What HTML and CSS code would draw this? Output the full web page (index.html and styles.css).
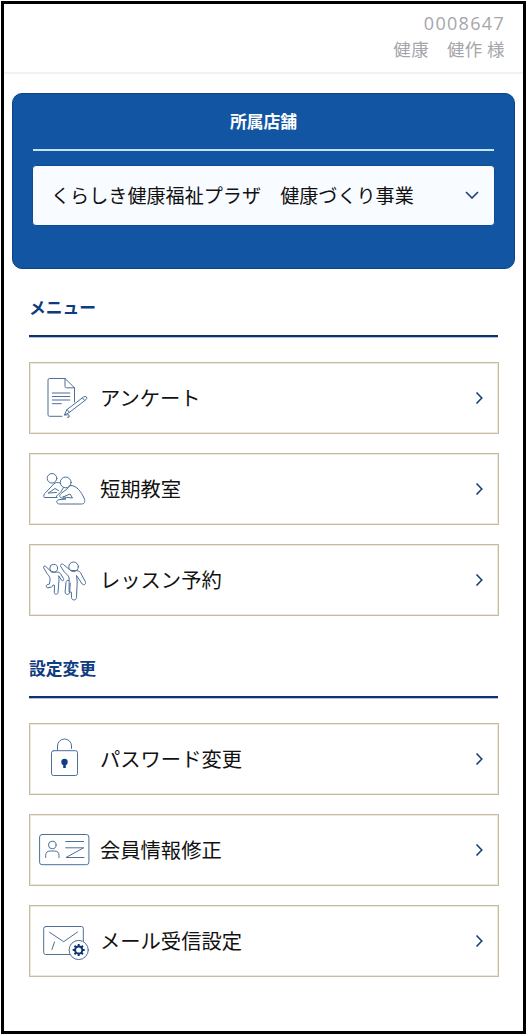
FILE: index.html
```html
<!DOCTYPE html>
<html lang="ja">

<head>
    <meta charset="UTF-8">
    <meta name="viewport" content="width=device-width, initial-scale=1.0">
    <title>メニュー</title>
    <link rel="stylesheet" href="styles.css">
</head>

<body>
    <div class="app">
        <header class="header">
            <div class="member-no">0008647</div>
            <div class="member-name">健康　健作 様</div>
        </header>

        <!-- 所属店舗 -->
        <section class="store">
            <h2 class="store-title">所属店舗</h2>
            <button type="button" class="store-select">
                <span>くらしき健康福祉プラザ　健康づくり事業</span>
                <svg class="chevron-down" viewBox="0 0 14 8"><path d="M1 1l6 6 6-6" /></svg>
            </button>
        </section>

        <!-- メニュー -->
        <section class="menu">
            <h2 class="menu-title">メニュー</h2>
            <a href="#" class="menu-item">
                <svg class="icon" viewBox="0 0 56 56">
                    <path d="M26 46.3H13.5a1.5 1.5 0 0 1-1.5-1.5V10a1.5 1.5 0 0 1 1.5-1.5H29l9.5 9.3v14M29 8.5v7.8a1.5 1.5 0 0 0 1.5 1.5h8" />
                    <path d="M16.3 23h17.5M16.3 26.5h17.5M16.3 30h17.5M16.3 33.7h9" />
                    <path d="M28.5 44.8l2.5-5.3L47.5 27q2-1.4 3 0t-.8 2.9L33.5 42.300zM31 39.5l2.5 2.8M46.5 27.8l2 2.6M28.5 44.8c1.5 1 3-.6 4.3 0s-1.5 1.7-1.3 2.5 1.7.2 2-1" />
                </svg>
                <span class="label">アンケート</span>
                <svg class="chevron" viewBox="0 0 8 14"><path d="M1.500 1.500L6.800 7l-5.300 5.500" /></svg>
            </a>
            <a href="#" class="menu-item">
                <svg class="icon" viewBox="0 0 56 56">
                    <circle cx="16" cy="17.3" r="4.800" />
                    <path d="M24 22c-2.500-1-4.500-.6-6.300 1L10 31.300c-2 1.700-3 4-1.600 5.200H21M12.500 32l8-.5M12.500 32l6.500-4.500 3.500 2" />
                    <circle cx="29.700" cy="21.400" r="5.400" />
                    <path d="M35 24.500c6 0 10.500 7 13 12.500 1.600 4 .4 6-2.500 6H23.500c-3.500 0-3.600-4-.5-4.300l7-.7-4.500-1c-2.500-.7-2.300-3 0-4.800L31 28c1.500-1.500 2-3 4-3.500M20 36.500c1-2.500 2-3 4.500-5l3-5M27 36l7-3 2.500 4-9.500-1" />
                </svg>
                <span class="label">短期教室</span>
                <svg class="chevron" viewBox="0 0 8 14"><path d="M1.500 1.500L6.800 7l-5.300 5.500" /></svg>
            </a>
            <a href="#" class="menu-item">
                <svg class="icon" viewBox="0 0 56 56">
                    <circle cx="17.700" cy="16.200" r="3.900" />
                    <path d="M9.500 14.300c-1.200-1-2.300.2-1.800 1.600L11 21.500c2.300 2.700 3.300 4 3 6.500l-.5 4-2.500.8c-1.500 1-.7 3.200.8 3l3.700-.8c1-.3 1.200-1 1.500-2l1.500.3-.2 7.400c0 2 3.700 2 3.700 0l1-13-.3-4 2.800 4.500c1.500 1.200 2.800 0 2-1.600l-3-5c-1-1.400-2-1.400-4-1.400h-4.300z" />
                    <circle cx="37.600" cy="14.800" r="4.800" />
                    <path d="M27.800 12.800c-1.400-1.700-3.700-.7-3.200 1.400l3.500 5.600c2 2.200 4.500 3.200 5 6.200v14l2.200 0 .2 5.500c.2 3.300 4.800 3.300 5-.1l.7-15.400-.7-6.500 5.700 8.500c2 1.600 4 .2 3.200-2.300l-5-9.200c-1.300-1.500-3-2-5-2h-4.300zM33 28.500c-1.500-.8-2.800 0-3 2l-.9 9.500c0 3.200 4.400 3.200 4.600 0l.6-9" />
                </svg>
                <span class="label">レッスン予約</span>
                <svg class="chevron" viewBox="0 0 8 14"><path d="M1.500 1.500L6.800 7l-5.300 5.500" /></svg>
            </a>
        </section>

        <!-- 設定変更 -->
        <section class="menu">
            <h2 class="menu-title">設定変更</h2>
            <a href="#" class="menu-item">
                <svg class="icon" viewBox="0 0 56 56">
                    <rect x="15.500" y="19.700" width="26" height="24.800" rx="2" />
                    <path d="M21.500 19.500V15a7 7 0 0 1 14 0v2.500" />
                    <circle class="fill" cx="28.500" cy="31" r="3.200" />
                    <path class="fill" d="M27.200 32h2.600v5h-2.600z" />
                </svg>
                <span class="label">パスワード変更</span>
                <svg class="chevron" viewBox="0 0 8 14"><path d="M1.500 1.500L6.800 7l-5.300 5.500" /></svg>
            </a>
            <a href="#" class="menu-item">
                <svg class="icon" viewBox="0 0 56 56">
                    <rect x="3.600" y="12.500" width="49.300" height="30.200" rx="2.500" />
                    <circle cx="16.300" cy="23" r="3.800" />
                    <path d="M9.700 35.500v-2q0-4.500 4.500-4.500H18.500q4.500 0 4.500 4.500v2M29.700 19.500h18M29.700 25.800h18l-17.700 9.700h18" />
                </svg>
                <span class="label">会員情報修正</span>
                <svg class="chevron" viewBox="0 0 8 14"><path d="M1.500 1.500L6.800 7l-5.300 5.500" /></svg>
            </a>
            <a href="#" class="menu-item">
                <svg class="icon" viewBox="0 0 56 56">
                    <rect x="7.700" y="13.500" width="39.600" height="28" rx="2" />
                    <path d="M13.500 19.300l14.200 9.400L41.500 19M18.500 29L16 36.500" />
                    <circle class="badge" cx="42.700" cy="37" r="9.600" />
                    <circle class="gear" cx="42.700" cy="37" r="3.600" />
                    <path class="gear" d="M42.700 33.500V31M42.700 40.500V43M39.200 37h-2.500M46.200 37h2.500M40.200 34.500l-1.700-1.700M45.200 39.500l1.700 1.700M45.200 34.500l1.700-1.700M40.200 39.500l-1.700 1.700" />
                </svg>
                <span class="label">メール受信設定</span>
                <svg class="chevron" viewBox="0 0 8 14"><path d="M1.500 1.500L6.800 7l-5.300 5.500" /></svg>
            </a>
        </section>
    </div>
</body>

</html>
```
FILE: styles.css
```css
* {
    box-sizing: border-box;
}

body {
    margin: 0;
    padding: 1px;
    background-color: #fff;
    font-family: "Noto Sans CJK JP", sans-serif;
    color: #111;
}

.app {
    width: 525px;
    height: 1033px;
    border: 3px solid #000;
    background-color: #fff;
}

.header {
    height: 70px;
    padding: 7px 18px 0 0;
    border-bottom: 2px solid #f1f1f2;
    text-align: right;
    color: #a5a6aa;
    line-height: 25px;
}

.member-no {
    font-family: "Open Sans", sans-serif;
    font-size: 18px;
    letter-spacing: 1.3px;
}

.member-name {
    font-size: 17.5px;
    letter-spacing: 0.4px;
}

/* 所属店舗 */
.store {
    width: 503px;
    height: 176px;
    margin: 19px 0 0 8px;
    padding: 0 19px;
    border: 1px solid #0b4389;
    border-radius: 10px;
    background-color: #1256a3;
}

.store-title {
    height: 57px;
    margin: 0 1px 14px;
    border-bottom: 2px solid #c5e3f8;
    color: #fff;
    font-size: 16.8px;
    line-height: 54px;
    text-align: center;
}

.store-select {
    display: flex;
    align-items: center;
    justify-content: space-between;
    width: 100%;
    height: 61px;
    padding: 0 15px 2px 18px;
    border: 1px solid #0d4b94;
    border-radius: 4px;
    background-color: #f8fbff;
    color: #111;
    font-family: inherit;
    font-size: 19.1px;
}

.chevron-down {
    width: 14px;
    height: 8px;
}

.chevron-down,
.chevron {
    fill: none;
    stroke: #1c3d7c;
    stroke-width: 1.6;
}

/* メニュー */
.menu {
    display: flex;
    flex-direction: column;
    gap: 19px;
    padding: 0 25px;
    margin-bottom: 14px;
}

.menu-title {
    height: 68px;
    margin: 0 0 6px;
    border-bottom: 2px solid #11306f;
    box-shadow: 0 1px 0 #b4c3dc;
    color: #0f3b80;
    font-size: 16.8px;
    line-height: 77px;
}

.menu-item {
    display: flex;
    align-items: center;
    width: 470px;
    height: 72px;
    padding: 0 15px 0 6px;
    border: 1px solid #c6bda1;
    box-shadow: inset 0 0 0 1px #ece8dc;
    color: #111;
    font-size: 20.3px;
    text-decoration: none;
}

.label {
    flex: 1;
    margin-left: 8px;
    padding-bottom: 2px;
}

.chevron {
    width: 8px;
    height: 14px;
}

.icon {
    width: 56px;
    height: 56px;
    fill: none;
    stroke: #4d6f98;
    stroke-width: 1;
    stroke-linejoin: round;
    stroke-linecap: round;
}

.icon .fill {
    fill: #0f3f8a;
    stroke: none;
}

.icon .badge {
    fill: #fff;
}

.icon .gear {
    stroke: #0f3474;
    stroke-width: 2;
    stroke-linecap: butt;
}
```
